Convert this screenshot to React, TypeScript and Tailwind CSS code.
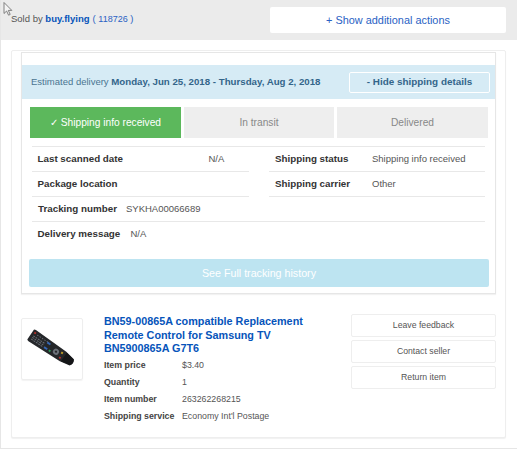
const font = { fontFamily: '"Liberation Sans", Arial, sans-serif' }

function Cursor() {
  return (
    <svg className="absolute left-[2px] top-[2px]" width="10" height="14" viewBox="0 0 10 14">
      <path d="M1 0.5 V11.5 L3.6 9 L5.6 13.2 L7.2 12.4 L5.3 8.4 H8.8 Z" fill="#f4f4f4" stroke="#666" strokeWidth="0.8" />
    </svg>
  )
}

function Remote() {
  const keys = [4, 7, 10, 13, 16]
  return (
    <svg width="54" height="42" viewBox="0 0 56 44">
      <g transform="rotate(34 28 22)">
        <path d="M1 16 Q1 15 3 15 L42 16 L53 18 Q56 22 53 26 L42 28 L3 29 Q1 29 1 28 Z" fill="#25272a" />
        <rect x="3" y="17" width="2" height="2" fill="#b8322c" />
        {keys.map((x) => (
          <g key={x} fill="#6b7078">
            <rect x={x} y="21" width="2" height="1" />
            <rect x={x} y="23" width="2" height="1" />
            <rect x={x} y="25" width="2" height="1" />
            <rect x={x + 3} y="18" width="1.5" height="1" />
          </g>
        ))}
        <rect x="20" y="18" width="4" height="2" fill="#3567b5" />
        <rect x="20" y="24" width="4" height="2" fill="#3567b5" />
        <rect x="26" y="24" width="2" height="2" fill="#2f9a5a" />
        <circle cx="33" cy="22" r="3.2" fill="#6b7078" />
        <circle cx="33" cy="22" r="1.2" fill="#25272a" />
        <rect x="38" y="18.5" width="2" height="2" fill="#c9a227" />
        <rect x="39" y="24" width="2" height="2" fill="#b8322c" />
        <path d="M43 16.5 L53 18.5 Q55.5 22 53 25.5 L43 27.5 Z" fill="#151618" />
      </g>
    </svg>
  )
}

function InfoRow({
  label,
  value,
  labelWidth,
  indent = 'pl-[5.5px]',
}: {
  label: string
  value?: string
  labelWidth: string
  indent?: string
}) {
  return (
    <div className={`flex h-[25px] items-center border-b border-[#e8e8e8] ${indent}`}>
      <span className={`${labelWidth} text-[9.8px] font-bold text-[#333]`}>{label}</span>
      {value && <span className="text-[9.5px] text-[#555]">{value}</span>}
    </div>
  )
}

function ItemRow({ label, value }: { label: string; value: string }) {
  return (
    <div className="flex h-[17px] items-center text-[8.8px]">
      <span className="w-[78px] font-bold text-[#444]">{label}</span>
      <span className="text-[#555]">{value}</span>
    </div>
  )
}

function ActionButton({ children }: { children: string }) {
  return (
    <button className="h-[23px] w-[145px] rounded-[2px] border border-[#eee] bg-white text-[8.7px] text-[#555]">
      {children}
    </button>
  )
}

export default function App() {
  return (
    <div style={font} className="relative h-[449px] w-[517px] overflow-hidden border-b border-l border-[#e6e6e6] bg-white">
      <Cursor />
      <div className="flex h-[40px] items-center justify-between bg-[#ebebeb] pl-[10px] pr-[11px]">
        <div className="-mt-[2px] text-[9.5px] text-[#555]">
          Sold by <span className="font-bold text-[#0654ba]">buy.flying</span>
          <span className="ml-[3px] text-[#2a62c4]">
            ( <span className="text-[9px]">118726</span> )
          </span>
        </div>
        <button className="h-[26px] w-[236px] rounded-[2px] bg-white text-[10.9px] text-[#2a62c4]">
          + Show additional actions
        </button>
      </div>

      <div className="ml-[10px] mt-[10px] h-[388px] w-[495px] rounded-[2px] border border-[#eee] bg-white px-[9px] pt-[1px] shadow-[0_1px_1px_rgba(0,0,0,0.06)]">
        <div className="h-[242px] border border-[#e6e6e6] shadow-[0_1px_1px_rgba(0,0,0,0.05)]">
          <div className="mt-[12px] flex h-[34px] items-center justify-between bg-[#d6ebf5] pl-[9px] pr-[5px] text-[9.5px] text-[#4a7591]">
            <div>
              Estimated delivery <span className="text-[9.7px] font-bold text-[#33658a]">Monday, Jun 25, 2018 - Thursday, Aug 2, 2018</span>
            </div>
            <button className="h-[21px] w-[141px] rounded-[2px] border border-white text-[9.9px] font-bold text-[#33658a]">
              - Hide shipping details
            </button>
          </div>

          <div className="mt-[8px] flex gap-[3px] pl-[8px] text-[10.2px]">
            <div className="flex h-[31px] w-[151px] items-center justify-center bg-[#5cb85c] text-white">✓ Shipping info received</div>
            <div className="flex h-[31px] w-[150px] items-center justify-center bg-[#eee] text-[#888]">In transit</div>
            <div className="flex h-[31px] w-[151px] items-center justify-center bg-[#eee] text-[#888]">Delivered</div>
          </div>

          <div className="mx-[10px] mt-[8px] border-t border-[#e8e8e8]">
            <div className="grid grid-cols-[217px_216px] justify-between">
              <InfoRow label="Last scanned date" value="N/A" labelWidth="w-[171px]" />
              <InfoRow label="Shipping status" value="Shipping info received" labelWidth="w-[97px]" indent="pl-[6px]" />
              <InfoRow label="Package location" labelWidth="w-[171px]" />
              <InfoRow label="Shipping carrier" value="Other" labelWidth="w-[97px]" indent="pl-[6px]" />
            </div>
            <InfoRow label="Tracking number" value="SYKHA00066689" labelWidth="w-[88px]" indent="pl-[6px]" />
            <div className="flex h-[25px] items-center pl-[5.5px]">
              <span className="w-[93px] text-[9.8px] font-bold text-[#333]">Delivery message</span>
              <span className="text-[9.5px] text-[#555]">N/A</span>
            </div>
          </div>

          <div className="ml-[7px] mr-[6px] mt-[12px] flex h-[28px] items-center justify-center rounded-[2px] bg-[#bde4f1] text-[10.7px] text-white">
            See Full tracking history
          </div>
        </div>

        <div className="mt-[24px] flex">
          <div className="flex h-[62px] w-[62px] shrink-0 items-center justify-center rounded-[2px] border border-[#eee] shadow-[0_1px_1px_rgba(0,0,0,0.05)]">
            <Remote />
          </div>
          <div className="ml-[21px] w-[226px] -translate-y-[3px]">
            <div className="text-[10.8px] leading-[13.5px] font-bold text-[#0654ba]">
              BN59-00865A compatible Replacement Remote Control for Samsung TV BN5900865A G7T6
            </div>
            <div className="mt-[2px]">
              <ItemRow label="Item price" value="$3.40" />
              <ItemRow label="Quantity" value="1" />
              <ItemRow label="Item number" value="263262268215" />
              <ItemRow label="Shipping service" value="Economy Int'l Postage" />
            </div>
          </div>
          <div className="ml-[21px] flex flex-col gap-[3px] -translate-y-[4px]">
            <ActionButton>Leave feedback</ActionButton>
            <ActionButton>Contact seller</ActionButton>
            <ActionButton>Return item</ActionButton>
          </div>
        </div>
      </div>
    </div>
  )
}
